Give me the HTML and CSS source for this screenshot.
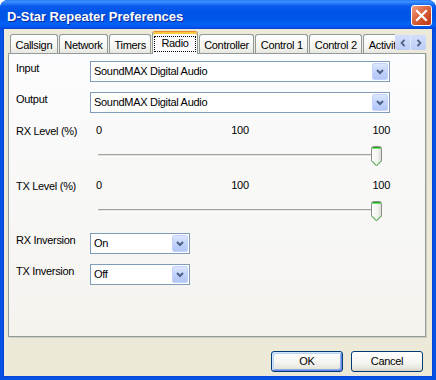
FILE: index.html
```html
<html lang="en">

<head>
    <meta charset="UTF-8">
    <meta name="viewport" content="width=device-width, initial-scale=1.0">
    <title>D-Star Repeater Preferences</title>
    <link rel="stylesheet" href="styles.css">
</head>

<body>
    <div class="window">
        <div class="titlebar">
            <span class="title">D-Star Repeater Preferences</span>
            <div class="close">
                <svg width="19" height="19" viewBox="0 0 19 19">
                    <path d="M5 5 L14 14 M14 5 L5 14" stroke="#fff" stroke-width="2.2" stroke-linecap="square" />
                </svg>
            </div>
        </div>

        <div class="client">
            <!-- tab strip, clipped where the scroll arrows start -->
            <div class="tabbar">
                <div class="tabs">
                    <div class="tab">Callsign</div>
                    <div class="tab">Network</div>
                    <div class="tab">Timers</div>
                    <div class="tab active"><span class="focus">Radio</span></div>
                    <div class="tab">Controller</div>
                    <div class="tab">Control 1</div>
                    <div class="tab">Control 2</div>
                    <div class="tab">Activity</div>
                </div>
                <div class="tab-scroll">
                    <span class="scroll-btn">
                        <svg width="6" height="8" viewBox="0 0 6 8"><path d="M4.5 0.8 L1.6 4 L4.5 7.2" fill="none" stroke="#4d6185" stroke-width="1.8" /></svg>
                    </span>
                    <span class="scroll-btn">
                        <svg width="6" height="8" viewBox="0 0 6 8"><path d="M1.5 0.8 L4.4 4 L1.5 7.2" fill="none" stroke="#4d6185" stroke-width="1.8" /></svg>
                    </span>
                </div>
            </div>

            <div class="panel">
                <div class="row">
                    <div class="label">Input</div>
                    <div class="combo">
                        <span class="combo-text">SoundMAX Digital Audio</span>
                        <span class="combo-btn"><svg width="8" height="6" viewBox="0 0 8 6"><path d="M1 1 L4 4 L7 1" fill="none" stroke="#4d6185" stroke-width="2" /></svg></span>
                    </div>
                </div>

                <div class="row">
                    <div class="label">Output</div>
                    <div class="combo">
                        <span class="combo-text">SoundMAX Digital Audio</span>
                        <span class="combo-btn"><svg width="8" height="6" viewBox="0 0 8 6"><path d="M1 1 L4 4 L7 1" fill="none" stroke="#4d6185" stroke-width="2" /></svg></span>
                    </div>
                </div>

                <div class="row level">
                    <div class="label">RX Level (%)</div>
                    <div class="level-ctrl">
                        <div class="scale"><span>0</span><span>100</span><span>100</span></div>
                        <div class="slider">
                            <div class="track"></div>
                            <svg class="thumb" width="11" height="21" viewBox="0 0 11 21">
                                <defs>
                                    <linearGradient id="thumbFill" x1="0" x2="1" y1="0" y2="0">
                                        <stop offset="0" stop-color="#ffffff" />
                                        <stop offset="0.6" stop-color="#f4f4f0" />
                                        <stop offset="1" stop-color="#d8d8d0" />
                                    </linearGradient>
                                </defs>
                                <path d="M0.5 2.5 Q0.5 0.5 2.5 0.5 H8.5 Q10.5 0.5 10.5 2.5 V15 L5.5 20 L0.5 15 Z" fill="url(#thumbFill)" stroke="#8d8e8b" />
                                <path d="M1.5 1.5 H9.5" stroke="#2ca82c" stroke-width="1" />
                                <path d="M1 2.5 H10" stroke="#6cdc6c" stroke-width="1" />
                                <path d="M1.2 15.2 L5.5 19.3 L9.8 15.2" fill="none" stroke="#42c042" stroke-width="1" />
                            </svg>
                        </div>
                    </div>
                </div>

                <div class="row level next">
                    <div class="label">TX Level (%)</div>
                    <div class="level-ctrl">
                        <div class="scale"><span>0</span><span>100</span><span>100</span></div>
                        <div class="slider">
                            <div class="track"></div>
                            <svg class="thumb" width="11" height="21" viewBox="0 0 11 21">
                                <path d="M0.5 2.5 Q0.5 0.5 2.5 0.5 H8.5 Q10.5 0.5 10.5 2.5 V15 L5.5 20 L0.5 15 Z" fill="url(#thumbFill)" stroke="#8d8e8b" />
                                <path d="M1.5 1.5 H9.5" stroke="#2ca82c" stroke-width="1" />
                                <path d="M1 2.5 H10" stroke="#6cdc6c" stroke-width="1" />
                                <path d="M1.2 15.2 L5.5 19.3 L9.8 15.2" fill="none" stroke="#42c042" stroke-width="1" />
                            </svg>
                        </div>
                    </div>
                </div>

                <div class="row after-level">
                    <div class="label">RX Inversion</div>
                    <div class="combo small">
                        <span class="combo-text">On</span>
                        <span class="combo-btn"><svg width="8" height="6" viewBox="0 0 8 6"><path d="M1 1 L4 4 L7 1" fill="none" stroke="#4d6185" stroke-width="2" /></svg></span>
                    </div>
                </div>

                <div class="row">
                    <div class="label">TX Inversion</div>
                    <div class="combo small">
                        <span class="combo-text">Off</span>
                        <span class="combo-btn"><svg width="8" height="6" viewBox="0 0 8 6"><path d="M1 1 L4 4 L7 1" fill="none" stroke="#4d6185" stroke-width="2" /></svg></span>
                    </div>
                </div>
            </div>

            <div class="buttons">
                <button class="btn default">OK</button>
                <button class="btn">Cancel</button>
            </div>
        </div>
    </div>
</body>

</html>
```

FILE: styles.css
```css
:root {
    --xp-face: #ece9d8;
    --xp-tab-border: #919b9c;
    --xp-field-border: #7f9db9;
    --xp-frame: #0352e4;
}

* {
    box-sizing: border-box;
}

body {
    margin: 0;
    background-color: #ffffff;
    font-family: 'Liberation Sans', Arial, sans-serif;
    font-size: 11px;
    line-height: 13px;
    letter-spacing: -0.3px;
    color: #000;
}

.window {
    width: 436px;
    height: 380px;
    display: flex;
    flex-direction: column;
    border-radius: 8px 8px 0 0;
    overflow: hidden;
    background-color: var(--xp-frame);
}

/* caption */
.titlebar {
    flex: none;
    height: 29px;
    display: flex;
    justify-content: space-between;
    align-items: flex-start;
    background: linear-gradient(#1a6ef7 0, #3d93ff 1px, #2c82fb 3px, #0a5cf0 6px, #0054e6 12px, #0055e8 19px, #0461f6 24px, #0058ee 27px, #0042d9 29px);
}

.title {
    margin: 9px 0 0 7px;
    font-weight: bold;
    font-size: 13px;
    line-height: 15px;
    letter-spacing: 0;
    color: #fff;
    text-shadow: 1px 1px 0 #0b2a9c;
}

.close {
    width: 21px;
    height: 21px;
    margin: 5px 4px 0 0;
    border: 1px solid #fff;
    border-radius: 3px;
    background: linear-gradient(135deg, #eea186 0%, #e0704d 35%, #cd4a27 70%, #bd3518 100%);
    display: flex;
    align-items: center;
    justify-content: center;
}

.client {
    flex: 1;
    margin: 0 4px 4px;
    display: flex;
    flex-direction: column;
    background-color: var(--xp-face);
    box-shadow: 0 0 0 1px #0a44d6;
}

/* tabs */
.tabbar {
    display: flex;
    height: 23px;
    margin: 2px 6px 0 4px;
    position: relative;
    z-index: 1;
}

.tabs {
    flex: 1;
    display: flex;
    align-items: flex-end;
    gap: 1px;
    padding-left: 2px;
    overflow: hidden;
}

.tab {
    flex: none;
    height: 19px;
    margin-bottom: 1px;
    padding: 4px 4.5px 0;
    border: 1px solid var(--xp-tab-border);
    border-bottom: 0;
    border-radius: 3px 3px 0 0;
    background: linear-gradient(#ffffff, #f5f5f1 65%, #e7e6df);
    white-space: nowrap;
}

.tab.active {
    height: 23px;
    margin-bottom: 0;
    padding: 4px 1px 0 1px;
    border-top: 1px solid #e68b2c;
    background: #fcfcfe;
    box-shadow: inset 0 2px 0 #ffc73c;
}

.focus {
    display: block;
    padding: 0 6px 1px;
    border: 1px dotted #000;
}

.tab-scroll {
    flex: none;
    width: 31px;
    height: 15px;
    margin-top: 4px;
    display: flex;
    gap: 1px;
    background-color: #dfe7fb;
}

.scroll-btn {
    flex: 1;
    display: flex;
    align-items: center;
    justify-content: center;
    background: linear-gradient(#d3defb, #bccdf7);
    border-radius: 2px;
}

/* page */
.panel {
    height: 284px;
    margin: -1px 6px 0 4px;
    padding: 7px 0 0 7px;
    border: 1px solid var(--xp-tab-border);
    background: linear-gradient(#fcfcfe, #f4f3ee);
    box-shadow: 1px 1px 0 #d0cdbf;
}

.row {
    display: flex;
    margin-top: 10px;
}

.row:first-child {
    margin-top: 0;
}

.row.level {
    margin-top: 11px;
}

.row.level.next {
    margin-top: 1px;
}

.row.after-level {
    margin-top: 0;
}

.label {
    flex: none;
    width: 74px;
    padding-top: 1px;
}

.combo {
    width: 300px;
    height: 21px;
    display: flex;
    align-items: center;
    padding: 0 1px 0 3px;
    border: 1px solid var(--xp-field-border);
    background-color: #fff;
}

.combo.small {
    width: 100px;
}

.combo-text {
    flex: 1;
    white-space: nowrap;
}

.combo-btn {
    width: 16px;
    height: 17px;
    display: flex;
    align-items: center;
    justify-content: center;
    border: 1px solid #c3d3fd;
    border-radius: 2px;
    background: linear-gradient(#dce6fe, #c0d1fb 55%, #b2c7f7);
}

.level-ctrl {
    width: 300px;
}

.scale {
    display: grid;
    grid-template-columns: 1fr auto 1fr;
    height: 13px;
}

.scale span:first-child {
    justify-self: start;
    margin-left: 6px;
}

.scale span:last-child {
    justify-self: end;
}

.slider {
    position: relative;
    height: 41px;
    margin: 0 8px;
    padding-top: 17px;
}

.track {
    height: 3px;
    border-top: 1px solid #a3a29d;
    border-bottom: 1px solid #ffffff;
    border-radius: 1px 0 0 1px;
    background-color: #e4e3dc;
}

/* thumb sits on the track */
.thumb {
    position: absolute;
    top: 9px;
    right: 0;
}

/* dialog buttons */
.buttons {
    display: flex;
    justify-content: flex-end;
    gap: 8px;
    margin: 14px 9px 0 0;
}

.btn {
    width: 72px;
    height: 21px;
    padding: 0;
    font: inherit;
    letter-spacing: inherit;
    color: #000;
    border: 1px solid #003c74;
    border-radius: 3px;
    background: linear-gradient(#ffffff, #f5f5f1 55%, #e8e6dd 85%, #d6d0c5);
}

.btn.default {
    box-shadow: inset 1px 1px 0 #cee7ff, inset -1px -1px 0 #6982ee, inset 2px 2px 0 #bcd4f6, inset -2px -2px 0 #89ade4;
}
```
